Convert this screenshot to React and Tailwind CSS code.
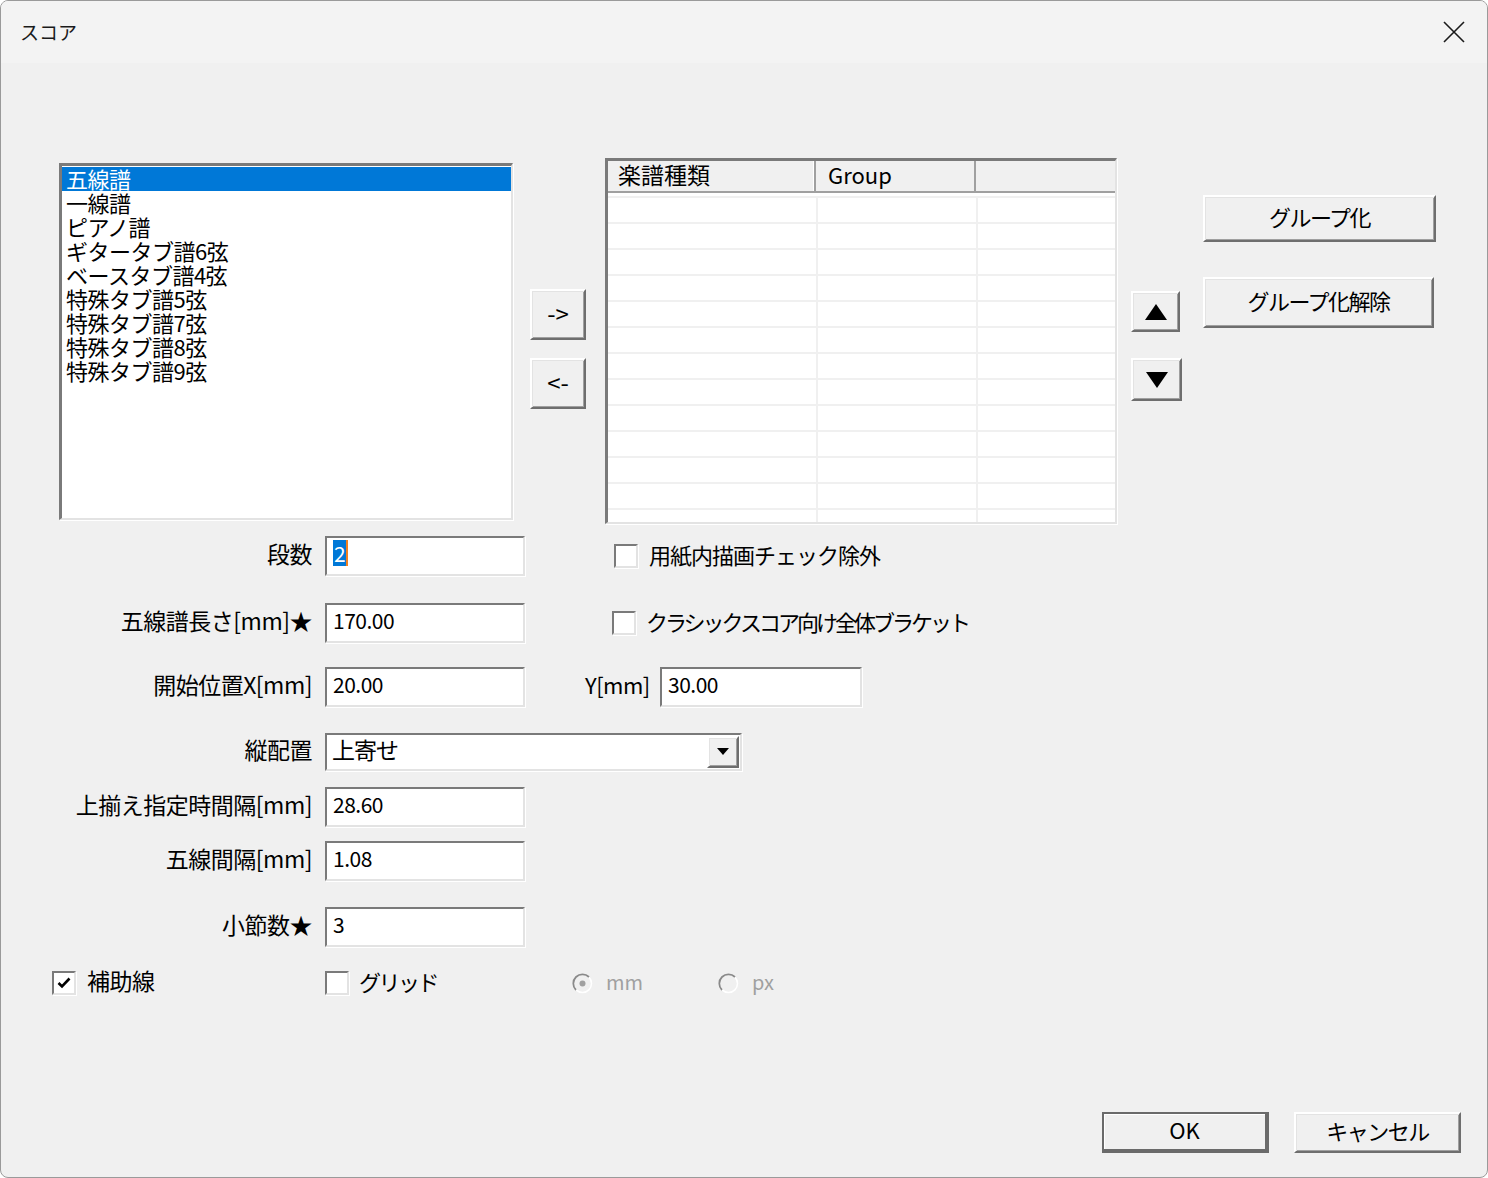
import clsx from 'clsx';

const FONT = "font-['Noto_Sans_CJK_JP','Noto_Sans',sans-serif]";

const raised =
  'flex items-center justify-center bg-[#f0f0f0] border-2 border-t-white border-l-white border-r-[#6e6e6e] border-b-[#6e6e6e] shadow-[inset_1px_1px_0_#e3e3e3,inset_-1px_-1px_0_#a0a0a0] text-black';

const sunken =
  'bg-white border-2 border-t-[#7a7a7a] border-l-[#7a7a7a] border-r-[#e3e3e3] border-b-[#e3e3e3] shadow-[1px_1px_0_#ffffff]';

const staffTypes = [
  '五線譜',
  '一線譜',
  'ピアノ譜',
  'ギタータブ譜6弦',
  'ベースタブ譜4弦',
  '特殊タブ譜5弦',
  '特殊タブ譜7弦',
  '特殊タブ譜8弦',
  '特殊タブ譜9弦',
];

function Button({ className, children }) {
  return (
    <button type="button" className={clsx(raised, className)}>
      {children}
    </button>
  );
}

function TextBox({ value, className, selected }) {
  return (
    <div className={clsx(sunken, 'h-[40px] flex items-center pl-[6px] pb-[6px] text-[21px] tracking-[-0.5px]', className)}>
      {selected ? (
        <span className="flex items-center">
          <span className="bg-[#0078d7] text-white px-[1px] leading-[26px]">{value}</span>
          <span className="w-[2px] h-[26px] bg-[#f08020]"></span>
        </span>
      ) : (
        <span className="leading-[26px]">{value}</span>
      )}
    </div>
  );
}

function CheckBox({ checked }) {
  return (
    <div className={clsx(sunken, 'w-[24px] h-[24px] flex items-center justify-center shrink-0')}>
      {checked && (
        <svg width="16" height="16" viewBox="0 0 16 16">
          <path d="M2.5 8 L6 11.5 L13.5 3.5" fill="none" stroke="#000" strokeWidth="2.6" />
        </svg>
      )}
    </div>
  );
}

function Radio({ checked, label }) {
  return (
    <div className="flex items-center text-[#a0a0a0]">
      <svg width="21" height="21" viewBox="0 0 21 21">
        <circle cx="10.5" cy="10.5" r="9" fill="#f0f0f0" stroke="#ffffff" strokeWidth="1.5" />
        <path d="M4 17 A9 9 0 0 1 17 4" fill="none" stroke="#8a8a8a" strokeWidth="1.8" />
        {checked && <circle cx="10.5" cy="10.5" r="3" fill="#a0a0a0" />}
      </svg>
      <span className="ml-[13px] pb-[3px] text-[20px] leading-none">{label}</span>
    </div>
  );
}

function Label({ children }) {
  return <div className="w-[311px] pb-[6px] text-right text-[23px] leading-none tracking-[-0.5px]">{children}</div>;
}

export default function App() {
  return (
    <div
      className={clsx(
        FONT,
        'w-[1488px] h-[1178px] flex flex-col bg-[#f0f0f0] border border-[#9a9a9a] rounded-lg overflow-hidden text-black'
      )}
    >
      {/* title bar */}
      <div className="h-[62px] shrink-0 bg-[#f3f3f3] flex items-center justify-between pl-[19px] pr-[22px]">
        <span className="text-[19px] text-[#1a1a1a]">スコア</span>
        <svg width="22" height="22" viewBox="0 0 22 22">
          <path d="M1 1 L21 21 M21 1 L1 21" stroke="#1a1a1a" strokeWidth="1.6" />
        </svg>
      </div>

      {/* body */}
      <div className="flex-1 flex flex-col">
        {/* top: list, arrows, table, order, grouping */}
        <div className="flex items-start mt-[95px]">
          <div className={clsx(sunken, 'ml-[58px] mt-[5px] w-[454px] h-[357px] border-t-[3px] border-l-[3px] pt-[1px]')}>
            {staffTypes.map((name, i) => (
              <div
                key={name}
                className={clsx(
                  'h-[24px] pl-[4px] text-[22px] leading-[22px] tracking-[-0.5px] whitespace-nowrap',
                  i === 0 ? 'bg-[#0078d7] text-white' : 'text-black'
                )}
              >
                {name}
              </div>
            ))}
          </div>

          <div className="ml-[17px] mt-[131px] flex flex-col gap-[18px]">
            <Button className="w-[56px] h-[51px] pb-[4px] text-[24px]">-&gt;</Button>
            <Button className="w-[56px] h-[51px] pb-[4px] text-[24px]">&lt;-</Button>
          </div>

          <div className={clsx(sunken, 'ml-[19px] w-[512px] h-[366px] border-t-[3px] border-l-[3px] overflow-hidden flex flex-col')}>
            <div className="h-[32px] shrink-0 flex bg-[#f0f0f0] border-b-2 border-b-[#a0a0a0] text-[23px] leading-none">
              <div className="w-[208px] pl-[10px] pb-[4px] border-r-2 border-r-[#a0a0a0] shadow-[inset_-1px_0_0_#ffffff] flex items-center">
                楽譜種類
              </div>
              <div className="w-[160px] pl-[12px] pb-[4px] border-r-2 border-r-[#a0a0a0] flex items-center text-[22px]">Group</div>
              <div className="flex-1"></div>
            </div>
            <div className="flex-1 bg-white overflow-hidden">
              <div className="h-[5px] border-b-2 border-[#f0f0f0]"></div>
              {Array.from({ length: 13 }).map((_, i) => (
                <div key={i} className="h-[26px] flex border-b-2 border-[#f0f0f0]">
                  <div className="w-[210px] border-r-2 border-[#f0f0f0]"></div>
                  <div className="w-[160px] border-r-2 border-[#f0f0f0]"></div>
                  <div className="flex-1"></div>
                </div>
              ))}
            </div>
          </div>

          <div className="ml-[14px] mt-[133px] flex flex-col">
            <Button className="w-[49px] h-[41px]">
              <svg width="24" height="18" viewBox="0 0 24 18">
                <polygon points="12,1 23,17 1,17" fill="#000" />
              </svg>
            </Button>
            <Button className="mt-[26px] w-[51px] h-[43px]">
              <svg width="24" height="18" viewBox="0 0 24 18">
                <polygon points="1,1 23,1 12,17" fill="#000" />
              </svg>
            </Button>
          </div>

          <div className="ml-[21px] mt-[37px] flex flex-col">
            <Button className="w-[233px] h-[47px] pb-[4px] text-[22px] tracking-[-1.5px]">グループ化</Button>
            <Button className="mt-[35px] w-[231px] h-[51px] pb-[4px] text-[22px] tracking-[-1.5px]">グループ化解除</Button>
          </div>
        </div>

        {/* form rows */}
        <div className="flex items-center h-[40px] mt-[12px]">
          <Label>段数</Label>
          <TextBox value="2" selected className="ml-[13px] w-[200px]" />
          <div className="ml-[89px] flex items-center">
            <CheckBox />
            <span className="ml-[11px] pb-[5px] text-[22px] leading-none tracking-[-1px]">用紙内描画チェック除外</span>
          </div>
        </div>

        <div className="flex items-center h-[40px] mt-[27px]">
          <Label>五線譜長さ[mm]★</Label>
          <TextBox value="170.00" className="ml-[13px] w-[200px]" />
          <div className="ml-[87px] flex items-center">
            <CheckBox />
            <span className="ml-[10px] pb-[5px] text-[22px] leading-none tracking-[-3px]">クラシックスコア向け全体ブラケット</span>
          </div>
        </div>

        <div className="flex items-center h-[40px] mt-[24px]">
          <Label>開始位置X[mm]</Label>
          <TextBox value="20.00" className="ml-[13px] w-[200px]" />
          <div className="ml-[60px] w-[75px] pb-[6px] text-[22px] leading-none tracking-[-0.5px]">Y[mm]</div>
          <TextBox value="30.00" className="w-[202px]" />
        </div>

        <div className="flex items-center h-[38px] mt-[26px]">
          <Label>縦配置</Label>
          <div className={clsx(sunken, 'ml-[13px] w-[417px] h-[38px] flex items-center justify-between pl-[5px] pr-[1px]')}>
            <span className="pb-[5px] text-[23px] leading-none tracking-[-1px]">上寄せ</span>
            <Button className="w-[32px] h-[32px]">
              <svg width="12" height="8" viewBox="0 0 12 8">
                <polygon points="0,0 12,0 6,7" fill="#000" />
              </svg>
            </Button>
          </div>
        </div>

        <div className="flex items-center h-[40px] mt-[16px]">
          <Label>上揃え指定時間隔[mm]</Label>
          <TextBox value="28.60" className="ml-[13px] w-[200px]" />
        </div>

        <div className="flex items-center h-[40px] mt-[14px]">
          <Label>五線間隔[mm]</Label>
          <TextBox value="1.08" className="ml-[13px] w-[200px]" />
        </div>

        <div className="flex items-center h-[40px] mt-[26px]">
          <Label>小節数★</Label>
          <TextBox value="3" className="ml-[13px] w-[200px]" />
        </div>

        <div className="flex items-center h-[24px] mt-[24px] pl-[51px]">
          <div className="w-[273px] flex items-center">
            <CheckBox checked />
            <span className="ml-[11px] pb-[5px] text-[23px] leading-none tracking-[-0.5px]">補助線</span>
          </div>
          <div className="w-[247px] flex items-center">
            <CheckBox />
            <span className="ml-[10px] pb-[5px] text-[22px] leading-none tracking-[-2.5px]">グリッド</span>
          </div>
          <div className="w-[146px]">
            <Radio checked label="mm" />
          </div>
          <Radio label="px" />
        </div>

        {/* dialog buttons */}
        <div className="mt-auto mb-[24px] mr-[26px] flex justify-end gap-[25px]">
          <button
            type="button"
            className="w-[167px] h-[41px] pb-[4px] flex items-center justify-center bg-[#f0f0f0] border-2 border-[#6a6a6a] border-r-[4px] border-b-[4px] shadow-[inset_1px_1px_0_#ffffff] text-[22px]"
          >
            OK
          </button>
          <Button className="w-[167px] h-[41px] pb-[4px] text-[22px] tracking-[-1.5px]">キャンセル</Button>
        </div>
      </div>
    </div>
  );
}
